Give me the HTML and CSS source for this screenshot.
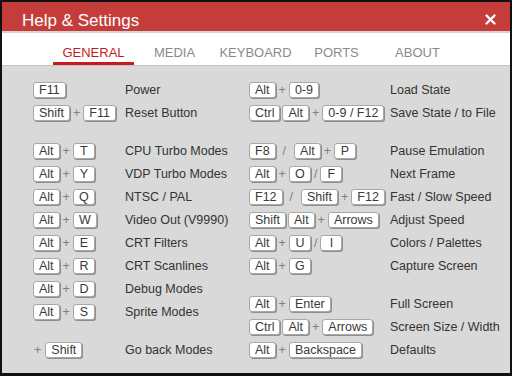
FILE: index.html
```html
<!DOCTYPE html>
<html lang="en">
<head>
    <meta charset="UTF-8">
    <meta name="viewport" content="width=device-width, initial-scale=1.0">
    <title>Help &amp; Settings</title>
    <link rel="stylesheet" href="styles.css">
</head>
<body>
    <div class="window">
        <header class="titlebar">
            <h1>Help &amp; Settings</h1>
            <button class="close" aria-label="Close">
                <svg width="11" height="11" viewBox="0 0 11 11">
                    <path d="M1.5 1.5 L9.5 9.5 M9.5 1.5 L1.5 9.5" stroke="#fff" stroke-width="2.4" stroke-linecap="round"/>
                </svg>
            </button>
        </header>

        <nav class="tabs">
            <a href="#" class="tab active">GENERAL</a>
            <a href="#" class="tab">MEDIA</a>
            <a href="#" class="tab">KEYBOARD</a>
            <a href="#" class="tab">PORTS</a>
            <a href="#" class="tab">ABOUT</a>
        </nav>

        <main class="content">
            <section class="col col-left">
                <div class="group">
                    <div class="row"><span class="keys"><kbd>F11</kbd></span><span class="desc">Power</span></div>
                    <div class="row"><span class="keys"><kbd>Shift</kbd><i class="sep">+</i><kbd>F11</kbd></span><span class="desc">Reset Button</span></div>
                </div>
                <div class="group">
                    <div class="row"><span class="keys"><kbd>Alt</kbd><i class="sep">+</i><kbd>T</kbd></span><span class="desc">CPU Turbo Modes</span></div>
                    <div class="row"><span class="keys"><kbd>Alt</kbd><i class="sep">+</i><kbd>Y</kbd></span><span class="desc">VDP Turbo Modes</span></div>
                    <div class="row"><span class="keys"><kbd>Alt</kbd><i class="sep">+</i><kbd>Q</kbd></span><span class="desc">NTSC / PAL</span></div>
                    <div class="row"><span class="keys"><kbd>Alt</kbd><i class="sep">+</i><kbd>W</kbd></span><span class="desc">Video Out (V9990)</span></div>
                    <div class="row"><span class="keys"><kbd>Alt</kbd><i class="sep">+</i><kbd>E</kbd></span><span class="desc">CRT Filters</span></div>
                    <div class="row"><span class="keys"><kbd>Alt</kbd><i class="sep">+</i><kbd>R</kbd></span><span class="desc">CRT Scanlines</span></div>
                    <div class="row"><span class="keys"><kbd>Alt</kbd><i class="sep">+</i><kbd>D</kbd></span><span class="desc">Debug Modes</span></div>
                    <div class="row"><span class="keys"><kbd>Alt</kbd><i class="sep">+</i><kbd>S</kbd></span><span class="desc">Sprite Modes</span></div>
                </div>
                <div class="group">
                    <div class="row"><span class="keys"><i class="sep lead">+</i><kbd>Shift</kbd></span><span class="desc">Go back Modes</span></div>
                </div>
            </section>

            <section class="col col-right">
                <div class="group">
                    <div class="row"><span class="keys"><kbd>Alt</kbd><i class="sep">+</i><kbd>0-9</kbd></span><span class="desc">Load State</span></div>
                    <div class="row"><span class="keys"><kbd>Ctrl</kbd><kbd>Alt</kbd><i class="sep">+</i><kbd>0-9 / F12</kbd></span><span class="desc">Save State / to File</span></div>
                </div>
                <div class="group">
                    <div class="row"><span class="keys"><kbd>F8</kbd><i class="sep wide">/</i><kbd>Alt</kbd><i class="sep">+</i><kbd>P</kbd></span><span class="desc">Pause Emulation</span></div>
                    <div class="row"><span class="keys"><kbd>Alt</kbd><i class="sep">+</i><kbd>O</kbd><i class="sep">/</i><kbd>F</kbd></span><span class="desc">Next Frame</span></div>
                    <div class="row"><span class="keys"><kbd>F12</kbd><i class="sep wide">/</i><kbd>Shift</kbd><i class="sep">+</i><kbd>F12</kbd></span><span class="desc">Fast / Slow Speed</span></div>
                    <div class="row"><span class="keys"><kbd>Shift</kbd><kbd>Alt</kbd><i class="sep">+</i><kbd>Arrows</kbd></span><span class="desc">Adjust Speed</span></div>
                    <div class="row"><span class="keys"><kbd>Alt</kbd><i class="sep">+</i><kbd>U</kbd><i class="sep">/</i><kbd>I</kbd></span><span class="desc">Colors / Palettes</span></div>
                    <div class="row"><span class="keys"><kbd>Alt</kbd><i class="sep">+</i><kbd>G</kbd></span><span class="desc">Capture Screen</span></div>
                </div>
                <div class="group">
                    <div class="row"><span class="keys"><kbd>Alt</kbd><i class="sep">+</i><kbd>Enter</kbd></span><span class="desc">Full Screen</span></div>
                    <div class="row"><span class="keys"><kbd>Ctrl</kbd><kbd>Alt</kbd><i class="sep">+</i><kbd>Arrows</kbd></span><span class="desc">Screen Size / Width</span></div>
                    <div class="row"><span class="keys"><kbd>Alt</kbd><i class="sep">+</i><kbd>Backspace</kbd></span><span class="desc">Defaults</span></div>
                </div>
            </section>
        </main>
    </div>
</body>
</html>
```

FILE: styles.css
```css
body {
    margin: 0;
    padding: 2px 2px 0 2px;
    background-color: #111;
    font-family: "Liberation Sans", Arial, sans-serif;
    color: #333;
}
.window {
    width: 508px;
    height: 371px;
    display: flex;
    flex-direction: column;
    background-color: #d9d9d9;
}
.titlebar {
    height: 31px;
    display: flex;
    justify-content: space-between;
    align-items: flex-start;
    padding: 0 14px 0 20px;
    background-color: #c43d3a;
    border-bottom: 2px solid #d4d4d4;
}
.titlebar h1 {
    margin: 9px 0 0 0;
    font-size: 17px;
    line-height: 20px;
    font-weight: normal;
    color: #fff;
}
.close {
    margin-top: 12px;
    padding: 0;
    border: none;
    background: none;
    width: 11px;
    height: 11px;
    cursor: pointer;
}
.close svg {
    display: block;
}
.tabs {
    display: flex;
    padding-left: 51px;
    background-color: #fff;
    border-bottom: 1px solid #c4c4c4;
}
.tab {
    width: 81px;
    padding: 12px 0 2px 0;
    border-bottom: 3px solid transparent;
    text-align: center;
    font-size: 13px;
    line-height: 15px;
    color: #8a8a8a;
    text-decoration: none;
}
.tab.active {
    color: #c8191d;
    border-bottom-color: #c8191d;
}
.content {
    display: flex;
    padding: 12px 0 0 31px;
}
.col-left {
    width: 216px;
}
.group {
    margin-bottom: 15px;
}
.row {
    display: flex;
    align-items: center;
    height: 23px;
    font-size: 12.5px;
}
.keys {
    display: flex;
    align-items: center;
}
.col-left .keys {
    width: 92px;
}
.col-right .keys {
    width: 141px;
}
kbd {
    display: inline-block;
    box-sizing: border-box;
    min-width: 22px;
    height: 16px;
    padding: 0 5px;
    margin-right: 2px;
    border: 1px solid #a8a8a8;
    border-radius: 3px;
    background-color: #fff;
    box-shadow: 1px 1px 0 #8e8e8e;
    font-family: "Liberation Sans", Arial, sans-serif;
    font-size: 12.5px;
    line-height: 14px;
    text-align: center;
    color: #3a3a3a;
}
.sep {
    font-style: normal;
    margin: 0 3px 0 1px;
    color: #808080;
}
.sep.wide {
    margin: 0 8px 0 5px;
}
.sep.lead {
    margin: 0 4px 0 1px;
}
.desc {
    color: #333;
    white-space: nowrap;
}
```
